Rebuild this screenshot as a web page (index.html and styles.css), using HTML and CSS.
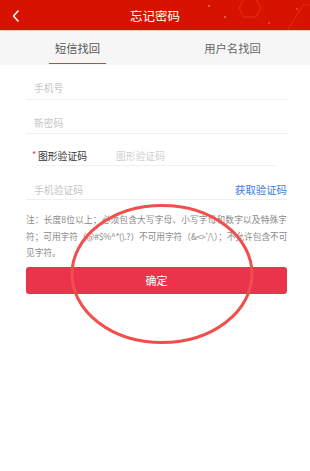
FILE: index.html
```html
<!DOCTYPE html>
<html lang="zh">
<head>
<meta charset="utf-8">
<title>忘记密码</title>
<link rel="stylesheet" href="styles.css">
</head>
<body>
<div class="page">
  <header class="topbar">
    <svg class="back" width="10" height="14" viewBox="0 0 10 14"><path d="M7 2 L2.5 7 L7 12" fill="none" stroke="#fff" stroke-width="1.6" stroke-linecap="round" stroke-linejoin="round"/></svg>
    <h1 class="title">忘记密码</h1>
    <svg class="decor" width="110" height="31" viewBox="0 0 110 31">
      <polygon points="44,-1 56,-1 61,8 56,17 44,17 39,8" fill="none" stroke="rgba(255,110,80,0.45)" stroke-width="0.7"/>
      <line x1="87" y1="31" x2="103" y2="5" stroke="rgba(255,110,80,0.4)" stroke-width="0.7"/>
      <line x1="103" y1="5" x2="110" y2="5" stroke="rgba(255,110,80,0.4)" stroke-width="0.7"/>
      <circle cx="9" cy="6" r="0.9" fill="rgba(255,150,120,0.8)"/>
      <circle cx="25" cy="17" r="0.9" fill="rgba(255,150,120,0.8)"/>
      <circle cx="69" cy="23" r="0.8" fill="rgba(255,150,120,0.8)"/>
      <circle cx="97" cy="9" r="0.8" fill="rgba(255,150,120,0.8)"/>
    </svg>
  </header>
  <nav class="tabs">
    <div class="tab tab-active">短信找回</div>
    <div class="tab">用户名找回</div>
  </nav>
  <main class="form">
    <div class="row row-1"><span class="ph">手机号</span></div>
    <div class="row row-2"><span class="ph">新密码</span></div>
    <div class="row row-3">
      <span class="req">*</span>
      <span class="label">图形验证码</span>
      <span class="ph ph-inline">图形验证码</span>
    </div>
    <div class="row row-4">
      <span class="ph">手机验证码</span>
      <span class="getcode">获取验证码</span>
    </div>
    <p class="note"><span class="note-line">注：长度8位以上；必须包含大写字母、小写字母和数字以及特殊字</span><span class="note-line note-tight">符；可用字符（@#$%^*().?）不可用字符（&amp;&lt;&gt;'/\）；不允许包含不可</span><span class="note-last">见字符。</span></p>
    <button class="submit">确定</button>
  </main>
  <svg class="mark" width="190" height="146" viewBox="0 0 190 146"><ellipse cx="95" cy="73" rx="90" ry="68.5" fill="none" stroke="#f24f4c" stroke-width="3"/></svg>
</div>
</body>
</html>
```
FILE: styles.css
```css
html, body {
  margin: 0;
  padding: 0;
  background: #fff;
}
body {
  font-family: "Noto Sans CJK SC", "Liberation Sans", sans-serif;
  width: 310px;
}
.page {
  position: relative;
  width: 310px;
  height: 471px;
  overflow: hidden;
}
.topbar {
  position: relative;
  height: 31px;
  background: #d81200;
  display: flex;
  align-items: center;
  justify-content: center;
  border-bottom: 1px solid #f1c9c4;
  box-sizing: border-box;
}
.back {
  position: absolute;
  left: 11px;
  top: 9px;
}
.decor {
  position: absolute;
  right: 0;
  top: 0;
}
.title {
  margin: 0;
  font-size: 12.5px;
  font-weight: normal;
  color: #fff;
  line-height: 31px;
}
.tabs {
  display: flex;
  height: 34px;
  background: #f6f6f6;
}
.tab {
  flex: 1;
  display: flex;
  justify-content: center;
  align-items: center;
  font-size: 11.3px;
  color: #666;
  padding-bottom: 1px;
  position: relative;
}
.tab-active {
  color: #555;
}
.tab-active::after {
  content: "";
  position: absolute;
  left: 49px;
  width: 57px;
  bottom: 1px;
  height: 1.5px;
  background: #e8334a;
}
.form {
  padding: 0 23px 0 26px;
}
.row {
  display: flex;
  align-items: center;
  border-bottom: 1px solid #f0f0f0;
  box-sizing: content-box;
}
.row-1 { padding-top: 12px; height: 22px; }
.row-2 { padding-top: 12px; height: 21px; }
.row-3 {
  padding-top: 13px;
  height: 18px;
  margin: 0 11px 0 11px;
  position: relative;
}
.row-4 { padding-top: 14px; height: 19px; justify-content: space-between; }
.ph {
  font-size: 9.8px;
  color: #c6c6c6;
  padding-left: 8px;
}
.row-3 .ph-inline {
  padding-left: 29px;
  color: #cfcfcf;
}
.req {
  position: absolute;
  left: -5px;
  top: 14px;
  color: #e8334a;
  font-size: 9px;
}
.label {
  font-size: 9.8px;
  color: #333;
  padding-left: 1px;
}
.getcode {
  font-size: 10.4px;
  color: #3d7cd6;
}
.note {
  margin: 12px 0 0 0;
  font-size: 8.7px;
  line-height: 16.5px;
  color: #8a8a8a;
}
.note-line {
  display: block;
  white-space: nowrap;
  text-align: justify;
  text-align-last: justify;
}
.note-tight {
  letter-spacing: -0.35px;
}
.note-last {
  display: block;
}
.submit {
  display: block;
  width: 100%;
  height: 27px;
  margin-top: 5px;
  border: none;
  border-radius: 3px;
  background: #e9344c;
  color: #fff;
  font-family: inherit;
  font-size: 11px;
  padding: 0;
}
.mark {
  position: absolute;
  left: 67px;
  top: 201px;
}
```
